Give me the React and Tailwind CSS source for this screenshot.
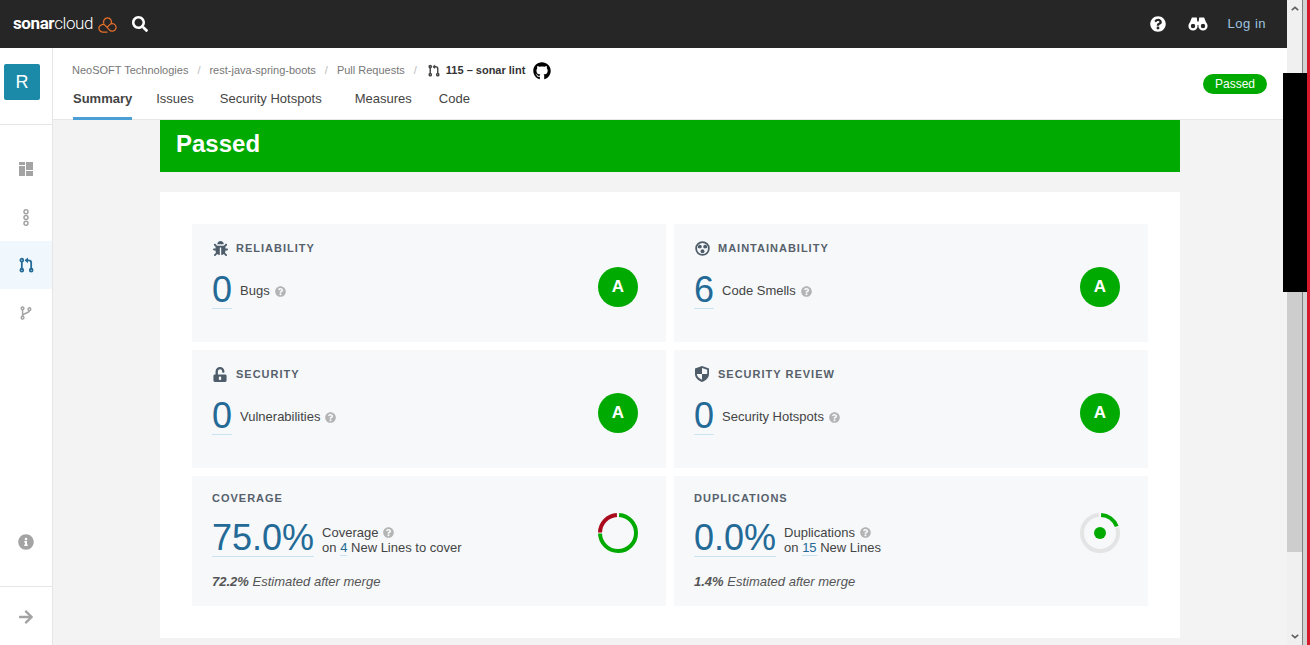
import React from 'react'
import { FaBug, FaUnlockAlt, FaGithub, FaQuestionCircle, FaInfoCircle, FaArrowRight, FaSearch } from 'react-icons/fa'

const PullRequestIcon = ({ className }) => (
  <svg viewBox="0 0 16 16" className={className} fill="none" stroke="currentColor" strokeWidth="1.9">
    <circle cx="3" cy="13.5" r="1.5" />
    <circle cx="13" cy="13.5" r="1.5" />
    <circle cx="3" cy="2.8" r="1.5" />
    <path d="M3 4.3V12M13 12V5.5C13 3.5 12 3 10 3H7" />
    <path d="M9.5 0 6 3 9.5 6" fill="currentColor" stroke="none" />
  </svg>
)

const SmellIcon = () => (
  <svg viewBox="0 0 16 16" className="w-[15px] h-[15px]" fill="currentColor">
    <circle cx="8" cy="8" r="6.8" fill="none" stroke="currentColor" strokeWidth="1.9" />
    <path d="M7 6.6 4.9 3.7A5.2 5.2 0 0 0 3 7.6Z" />
    <path d="M9 6.6 11.1 3.7A5.2 5.2 0 0 1 13 7.6Z" />
    <circle cx="5.3" cy="6" r="1.9" />
    <circle cx="10.7" cy="6" r="1.9" />
    <circle cx="8" cy="11" r="2.1" />
  </svg>
)

const ShieldIcon = () => (
  <svg viewBox="0 0 14 16" className="w-[14px] h-4">
    <path d="M7 0 14 2.5V8c0 4-3.5 6.8-7 8-3.5-1.2-7-4-7-8V2.5Z" fill="#4f5d6b" />
    <path d="M7 2 12.2 3.8V8H7ZM7 8v5.8C4.6 12.8 2 10.8 1.8 8Z" fill="#f6f8fa" />
  </svg>
)

const BinocularsIcon = () => (
  <svg viewBox="0 0 20 14" className="w-5 h-[14px]" fill="none" stroke="white">
    <circle cx="5" cy="9" r="3.4" strokeWidth="2.4" />
    <circle cx="15" cy="9" r="3.4" strokeWidth="2.4" />
    <path d="M2.2 7 4.5 1.5H8L8.6 6M17.8 7 15.5 1.5H12L11.4 6" strokeWidth="1.8" fill="white" />
    <path d="M8 4.5h4V8H8Z" fill="white" stroke="none" />
  </svg>
)

const Help = () => <FaQuestionCircle className="text-[#b4b4b4] w-[11px] h-[11px]" />

const Grade = () => (
  <div className="w-10 h-10 rounded-full bg-[#00aa00] text-white flex items-center justify-center font-bold text-[17px]">A</div>
)

const Value = ({ children }) => (
  <span className="block text-[36px] leading-[36px] text-[#236a97] border-b border-[#cae3f2]">{children}</span>
)

const RatingCard = ({ icon, title, value, label }) => (
  <div className="bg-[#f6f8fa] h-[118px] px-5 pt-4 flex justify-between">
    <div>
      <div className="flex items-center gap-2 h-4">
        <span className="w-4 flex justify-center text-[#4f5d6b]">{icon}</span>
        <span className="text-[11px] font-bold tracking-[1px] text-[#56616c]">{title}</span>
      </div>
      <div className="flex items-center mt-4">
        <Value>{value}</Value>
        <span className="ml-2 text-[13px] text-[#444]">{label}</span>
        <span className="ml-[5px] mt-[2px]"><Help /></span>
      </div>
    </div>
    <div className="mt-[27px] mr-2"><Grade /></div>
  </div>
)

const MeasureCard = ({ title, value, label, count, rest, estimate, chart }) => (
  <div className="bg-[#f6f8fa] h-[130px] px-5 pt-[14px] flex justify-between">
    <div>
      <div className="h-4 flex items-center text-[11px] font-bold tracking-[1px] text-[#56616c]">{title}</div>
      <div className="flex items-center mt-[14px]">
        <Value>{value}</Value>
        <div className="ml-2 mt-[2px] text-[13px] leading-[15px] text-[#444]">
          <div className="flex items-center gap-[5px]">{label} <Help /></div>
          <div>on <span className="text-[#236a97] border-b border-[#cae3f2]">{count}</span> {rest}</div>
        </div>
      </div>
      <div className="mt-[15px] text-[13px] italic text-[#555]"><b>{estimate}</b> Estimated after merge</div>
    </div>
    <div className="mt-[23px] mr-2">{chart}</div>
  </div>
)

const CoverageDonut = () => (
  <svg viewBox="0 0 40 40" className="w-10 h-10" fill="none" strokeWidth="4">
    <circle cx="20" cy="20" r="18" pathLength="100" stroke="#00aa00" strokeDasharray="73.5 26.5" strokeDashoffset="-1" transform="rotate(-90 20 20)" />
    <circle cx="20" cy="20" r="18" pathLength="100" stroke="#a90b1c" strokeDasharray="23.5 76.5" strokeDashoffset="-75.5" transform="rotate(-90 20 20)" />
  </svg>
)

const DuplicationDonut = () => (
  <svg viewBox="0 0 40 40" className="w-10 h-10" fill="none" strokeWidth="4">
    <circle cx="20" cy="20" r="18" pathLength="100" stroke="#e4e4e4" strokeDasharray="79 21" strokeDashoffset="-20" transform="rotate(-90 20 20)" />
    <circle cx="20" cy="20" r="18" pathLength="100" stroke="#00aa00" strokeDasharray="18 82" strokeDashoffset="-1" transform="rotate(-90 20 20)" />
    <circle cx="20" cy="20" r="6" fill="#00aa00" />
  </svg>
)

const SideItem = ({ active, children }) => (
  <div className={`h-12 flex items-center justify-center ${active ? 'bg-[#f0f8fd] text-[#236a97]' : 'text-[#a3a3a3]'}`}>{children}</div>
)

const Sidebar = () => (
  <aside className="w-[53px] shrink-0 bg-white border-r border-[#e6e6e6] flex flex-col">
    <div className="h-[77px] border-b border-[#e6e6e6] pt-4 pl-1">
      <div className="w-9 h-9 rounded-[2px] bg-[#1b8aa8] text-white flex items-center justify-center text-[18px]">R</div>
    </div>
    <div className="pt-[20px]">
      <SideItem>
        <svg viewBox="0 0 14 14" className="w-[14px] h-[14px]" fill="currentColor">
          <rect x="0" y="0" width="6" height="3" />
          <rect x="0" y="4" width="6" height="10" />
          <rect x="7" y="0" width="7" height="8" />
          <rect x="7" y="9" width="7" height="5" />
        </svg>
      </SideItem>
      <SideItem>
        <svg viewBox="0 0 8 17" className="w-2 h-[17px]" fill="none" stroke="currentColor" strokeWidth="1.5">
          <circle cx="4" cy="2.8" r="2" />
          <circle cx="4" cy="8.5" r="2" />
          <circle cx="4" cy="14.2" r="2" />
        </svg>
      </SideItem>
      <SideItem active><PullRequestIcon className="w-[15px] h-[16px]" /></SideItem>
      <SideItem>
        <svg viewBox="0 0 14 16" className="w-[12px] h-[16px]" fill="none" stroke="currentColor" strokeWidth="1.7">
          <circle cx="3" cy="2.5" r="1.6" />
          <circle cx="3" cy="13.5" r="1.6" />
          <circle cx="11" cy="3.5" r="1.6" />
          <path d="M3 4v8M3 11c0-3 8-2.5 8-6" />
        </svg>
      </SideItem>
    </div>
    <div className="flex-1" />
    <div className="h-[89px] border-b border-[#e6e6e6] flex items-center justify-center text-[#a3a3a3]">
      <FaInfoCircle className="w-4 h-4" />
    </div>
    <div className="h-[58px] pt-[2px] flex items-center justify-center text-[#a3a3a3]">
      <FaArrowRight className="w-4 h-4" />
    </div>
  </aside>
)

const Crumb = ({ children }) => (
  <>
    <span className="text-[11px] text-[#777]">{children}</span>
    <span className="text-[11px] text-[#bbb] mx-[9px]">/</span>
  </>
)

const tabs = [
  { name: 'Summary', cls: 'font-bold border-[#4b9fd5]' },
  { name: 'Issues', cls: 'ml-6 border-transparent' },
  { name: 'Security Hotspots', cls: 'ml-[26px] border-transparent' },
  { name: 'Measures', cls: 'ml-[33px] border-transparent' },
  { name: 'Code', cls: 'ml-[27px] border-transparent' },
]

const PageHeader = () => (
  <div className="h-[72px] bg-white border-b border-[#e6e6e6] pl-5 pr-5 flex justify-between">
    <div>
      <div className="flex items-center h-[44px] pt-[1px] -ml-px">
        <Crumb>NeoSOFT Technologies</Crumb>
        <Crumb>rest-java-spring-boots</Crumb>
        <Crumb>Pull Requests</Crumb>
        <PullRequestIcon className="w-[12px] h-[15px] ml-[2px] text-[#444]" />
        <span className="text-[11px] font-bold text-[#333] ml-[6px]">115 – sonar lint</span>
        <FaGithub className="w-[18px] h-[18px] text-black ml-2" />
      </div>
      <div className="flex items-start">
        {tabs.map((t) => (
          <div key={t.name} className={`h-7 border-b-[3px] text-[13px] leading-[14px] text-[#444] ${t.cls}`}>{t.name}</div>
        ))}
      </div>
    </div>
    <div className="pt-[26px]">
      <div className="h-5 w-16 rounded-full bg-[#00aa00] text-white text-[12px] flex items-center justify-center">Passed</div>
    </div>
  </div>
)

const Scrollbar = () => (
  <div className="w-[23px] shrink-0 flex">
    <div className="w-[15px] bg-[#f0f0f0] flex flex-col items-center justify-between">
      <div className="h-[17px] flex items-center text-[#606060]">
        <svg viewBox="0 0 10 6" className="w-2 h-[5px]" fill="none" stroke="currentColor" strokeWidth="2"><path d="M1 5 5 1.5 9 5" /></svg>
      </div>
      <div className="w-full h-[260px] bg-[#cdcdcd] mt-[275px]" />
      <div className="flex-1" />
      <div className="h-[17px] flex items-center text-[#606060]">
        <svg viewBox="0 0 10 6" className="w-2 h-[5px]" fill="none" stroke="currentColor" strokeWidth="2"><path d="M1 1 5 4.5 9 1" /></svg>
      </div>
    </div>
    <div className="w-px bg-[#808080]" />
    <div className="w-1 bg-[#d2d2d2]" />
    <div className="w-[3px] bg-[#d9182d]" />
  </div>
)

export default function App() {
  return (
    <div className="relative w-[1310px] h-[645px] overflow-hidden flex bg-white font-['Liberation_Sans',sans-serif]">
      <div className="w-[1287px] flex flex-col">
        <header className="h-12 shrink-0 bg-[#262626] flex items-center pl-[13px] pr-[21px]">
          <span className="text-[17px] text-white tracking-[-0.4px] font-['Roboto',sans-serif]"><b className="font-bold">sonar</b><span className="font-light">cloud</span></span>
          <svg viewBox="0 0 20 18" className="w-[19px] h-[17px] ml-[5px]" fill="none" stroke="#e8702a" strokeWidth="1.3">
            <path d="M6.3 8.2a4.2 4.2 0 1 1 7.4 0" />
            <path d="M10 17H5a4 4 0 1 1 2.8-6.8L12 14.6A4 4 0 1 0 15 8a4 4 0 0 0-3 1.4L9.6 12" />
          </svg>
          <FaSearch className="w-4 h-4 text-white ml-[15px]" />
          <div className="flex-1" />
          <FaQuestionCircle className="w-4 h-4 text-white" />
          <div className="ml-[22px]"><BinocularsIcon /></div>
          <span className="ml-[20px] text-[13px] tracking-[0.5px] text-[#9fc4e0]">Log in</span>
        </header>
        <div className="flex-1 flex min-h-0">
          <Sidebar />
          <div className="flex-1 flex flex-col bg-[#f3f3f3] min-w-0">
            <PageHeader />
            <main className="pl-[107px]">
              <div className="w-[1020px]">
                <div className="h-[52px] bg-[#00aa00] text-white font-bold text-[24px] flex items-center pl-4 pb-1">Passed</div>
                <div className="mt-5 bg-white p-8 grid grid-cols-2 gap-2">
                  <RatingCard icon={<FaBug className="w-[15px] h-[15px]" />} title="RELIABILITY" value="0" label="Bugs" />
                  <RatingCard icon={<SmellIcon />} title="MAINTAINABILITY" value="6" label="Code Smells" />
                  <RatingCard icon={<FaUnlockAlt className="w-[14px] h-[15px]" />} title="SECURITY" value="0" label="Vulnerabilities" />
                  <RatingCard icon={<ShieldIcon />} title="SECURITY REVIEW" value="0" label="Security Hotspots" />
                  <MeasureCard title="COVERAGE" value="75.0%" label="Coverage" count="4" rest="New Lines to cover" estimate="72.2%" chart={<CoverageDonut />} />
                  <MeasureCard title="DUPLICATIONS" value="0.0%" label="Duplications" count="15" rest="New Lines" estimate="1.4%" chart={<DuplicationDonut />} />
                </div>
              </div>
            </main>
          </div>
        </div>
      </div>
      <Scrollbar />
      {/* black block painted over the scrollbar in the capture */}
      <div className="absolute left-[1283px] top-[73px] w-[24px] h-[219px] bg-black" />
    </div>
  )
}
